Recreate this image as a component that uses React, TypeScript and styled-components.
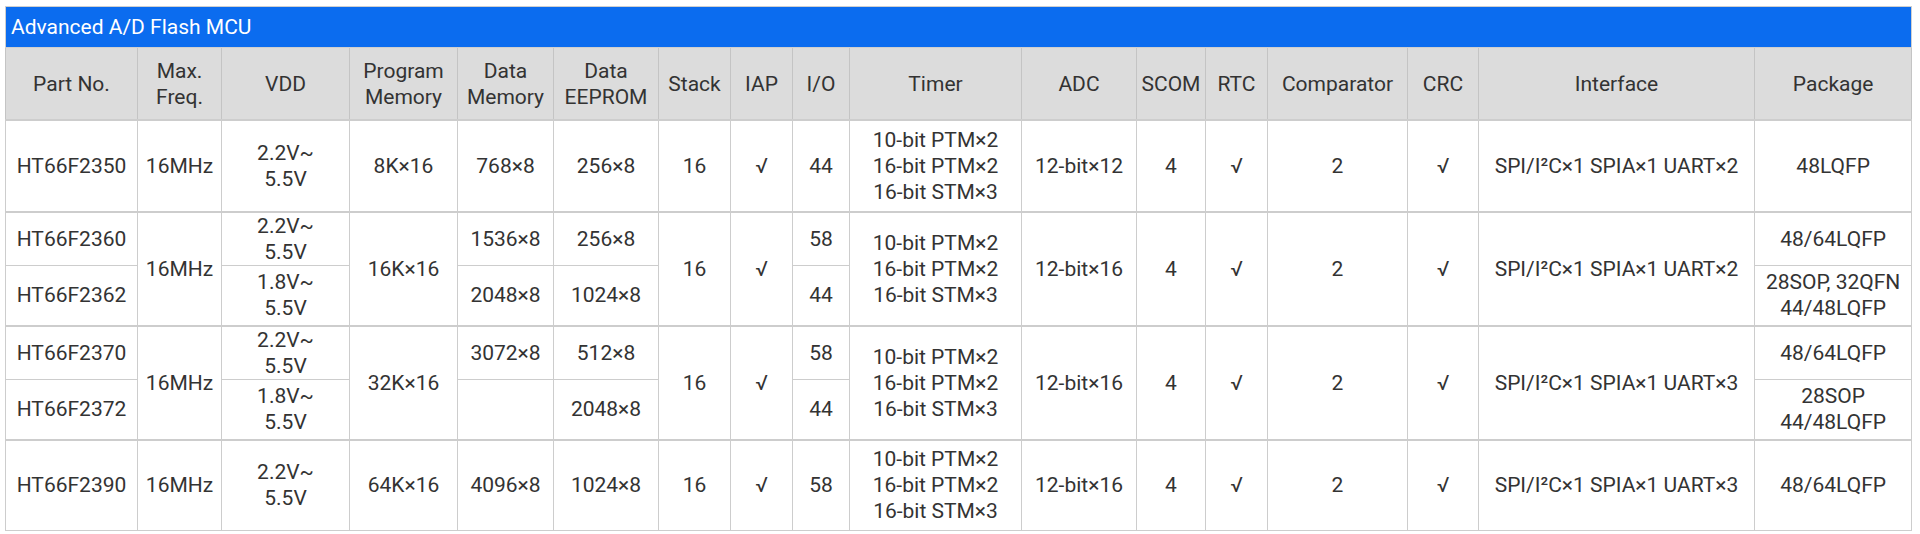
import React from 'react'
import styled, { createGlobalStyle } from 'styled-components'

const GlobalStyle = createGlobalStyle`
  body {
    margin: 0;
    background: #fff;
    font-family: Roboto, "Liberation Sans", Arial, sans-serif;
  }
`

const Wrapper = styled.div`
  padding: 6px 8px 0 5px;
`

const Table = styled.table`
  width: 1906px;
  table-layout: fixed;
  border-collapse: collapse;
  color: #333;
  font-size: 21px;
  line-height: 26px;
`

const Col = styled.col<{ $w: number }>`
  width: ${({ $w }) => $w}px;
`

const Title = styled.th`
  height: 40px;
  padding: 0 5px;
  background: #0b6cef;
  color: #fff;
  font-weight: 400;
  text-align: left;
  border: 1px solid #cfcfcf;
`

const Head = styled.th`
  height: 71px;
  padding: 0 4px;
  background: #dcdcdc;
  color: #333;
  font-weight: 400;
  text-align: center;
  border: 1px solid #c4c4c4;
  white-space: nowrap;
`

const Row = styled.tr<{ $h: number; $group?: boolean }>`
  height: ${({ $h }) => $h}px;

  & > td {
    border-top: ${({ $group }) => ($group ? '2px' : '1px')} solid #cdcdcd;
  }
`

const Cell = styled.td`
  padding: 0 4px;
  border: 1px solid #cdcdcd;
  text-align: center;
  vertical-align: middle;
  white-space: nowrap;
`

const widths = [132, 84, 128, 108, 96, 105, 72, 62, 57, 172, 115, 69, 62, 140, 71, 276, 157]

const heads = [
  ['Part No.'],
  ['Max.', 'Freq.'],
  ['VDD'],
  ['Program', 'Memory'],
  ['Data', 'Memory'],
  ['Data', 'EEPROM'],
  ['Stack'],
  ['IAP'],
  ['I/O'],
  ['Timer'],
  ['ADC'],
  ['SCOM'],
  ['RTC'],
  ['Comparator'],
  ['CRC'],
  ['Interface'],
  ['Package'],
]

const timer = ['10-bit PTM×2', '16-bit PTM×2', '16-bit STM×3']
const vdd22 = ['2.2V~', '5.5V']
const vdd18 = ['1.8V~', '5.5V']

const Lines: React.FC<{ items: string[] }> = ({ items }) => (
  <>
    {items.map((t, i) => (
      <React.Fragment key={i}>
        {i > 0 && <br />}
        {t}
      </React.Fragment>
    ))}
  </>
)

const App: React.FC = () => {
  return (
    <Wrapper>
      <GlobalStyle />
      <Table>
        <colgroup>
          {widths.map((w, i) => (
            <Col key={i} $w={w} />
          ))}
        </colgroup>
        <thead>
          <tr>
            <Title colSpan={17}>Advanced A/D Flash MCU</Title>
          </tr>
          <tr>
            {heads.map((h, i) => (
              <Head key={i}>
                <Lines items={h} />
              </Head>
            ))}
          </tr>
        </thead>
        <tbody>
          <Row $h={92} $group>
            <Cell>HT66F2350</Cell>
            <Cell>16MHz</Cell>
            <Cell><Lines items={vdd22} /></Cell>
            <Cell>8K×16</Cell>
            <Cell>768×8</Cell>
            <Cell>256×8</Cell>
            <Cell>16</Cell>
            <Cell>√</Cell>
            <Cell>44</Cell>
            <Cell><Lines items={timer} /></Cell>
            <Cell>12-bit×12</Cell>
            <Cell>4</Cell>
            <Cell>√</Cell>
            <Cell>2</Cell>
            <Cell>√</Cell>
            <Cell>SPI/I²C×1 SPIA×1 UART×2</Cell>
            <Cell>48LQFP</Cell>
          </Row>

          <Row $h={53} $group>
            <Cell>HT66F2360</Cell>
            <Cell rowSpan={2}>16MHz</Cell>
            <Cell><Lines items={vdd22} /></Cell>
            <Cell rowSpan={2}>16K×16</Cell>
            <Cell>1536×8</Cell>
            <Cell>256×8</Cell>
            <Cell rowSpan={2}>16</Cell>
            <Cell rowSpan={2}>√</Cell>
            <Cell>58</Cell>
            <Cell rowSpan={2}><Lines items={timer} /></Cell>
            <Cell rowSpan={2}>12-bit×16</Cell>
            <Cell rowSpan={2}>4</Cell>
            <Cell rowSpan={2}>√</Cell>
            <Cell rowSpan={2}>2</Cell>
            <Cell rowSpan={2}>√</Cell>
            <Cell rowSpan={2}>SPI/I²C×1 SPIA×1 UART×2</Cell>
            <Cell>48/64LQFP</Cell>
          </Row>
          <Row $h={60}>
            <Cell>HT66F2362</Cell>
            <Cell><Lines items={vdd18} /></Cell>
            <Cell>2048×8</Cell>
            <Cell>1024×8</Cell>
            <Cell>44</Cell>
            <Cell><Lines items={['28SOP, 32QFN', '44/48LQFP']} /></Cell>
          </Row>

          <Row $h={54} $group>
            <Cell>HT66F2370</Cell>
            <Cell rowSpan={2}>16MHz</Cell>
            <Cell><Lines items={vdd22} /></Cell>
            <Cell rowSpan={2}>32K×16</Cell>
            <Cell>3072×8</Cell>
            <Cell>512×8</Cell>
            <Cell rowSpan={2}>16</Cell>
            <Cell rowSpan={2}>√</Cell>
            <Cell>58</Cell>
            <Cell rowSpan={2}><Lines items={timer} /></Cell>
            <Cell rowSpan={2}>12-bit×16</Cell>
            <Cell rowSpan={2}>4</Cell>
            <Cell rowSpan={2}>√</Cell>
            <Cell rowSpan={2}>2</Cell>
            <Cell rowSpan={2}>√</Cell>
            <Cell rowSpan={2}>SPI/I²C×1 SPIA×1 UART×3</Cell>
            <Cell>48/64LQFP</Cell>
          </Row>
          <Row $h={60}>
            <Cell>HT66F2372</Cell>
            <Cell><Lines items={vdd18} /></Cell>
            <Cell />
            <Cell>2048×8</Cell>
            <Cell>44</Cell>
            <Cell><Lines items={['28SOP', '44/48LQFP']} /></Cell>
          </Row>

          <Row $h={91} $group>
            <Cell>HT66F2390</Cell>
            <Cell>16MHz</Cell>
            <Cell><Lines items={vdd22} /></Cell>
            <Cell>64K×16</Cell>
            <Cell>4096×8</Cell>
            <Cell>1024×8</Cell>
            <Cell>16</Cell>
            <Cell>√</Cell>
            <Cell>58</Cell>
            <Cell><Lines items={timer} /></Cell>
            <Cell>12-bit×16</Cell>
            <Cell>4</Cell>
            <Cell>√</Cell>
            <Cell>2</Cell>
            <Cell>√</Cell>
            <Cell>SPI/I²C×1 SPIA×1 UART×3</Cell>
            <Cell>48/64LQFP</Cell>
          </Row>
        </tbody>
      </Table>
    </Wrapper>
  )
}

export default App
